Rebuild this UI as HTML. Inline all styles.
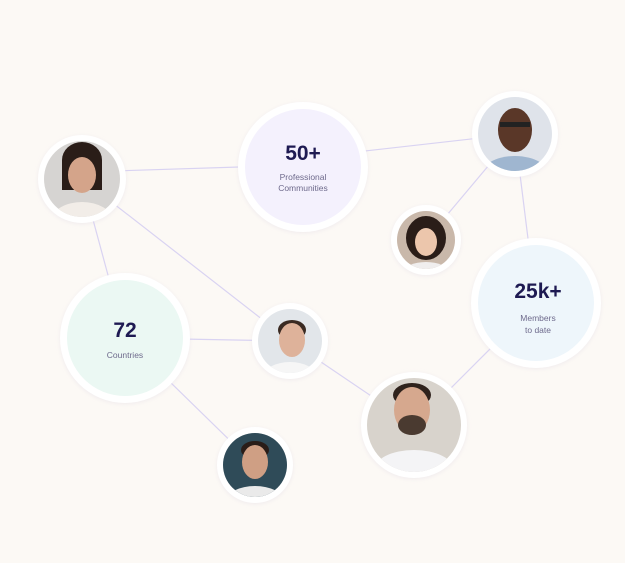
<!DOCTYPE html>
<html><head><style>
html,body{margin:0;padding:0;background:#fcf9f5;}
body{width:625px;height:563px;position:relative;overflow:hidden;font-family:"Liberation Sans",sans-serif;}
svg{position:absolute;left:0;top:0}
</style></head><body>
<svg width="625" height="563" viewBox="0 0 625 563">
<defs>
<filter id="sh" x="-20%" y="-20%" width="140%" height="140%"><feDropShadow dx="0" dy="1" stdDeviation="2" flood-color="#d8d0e0" flood-opacity="0.35"/></filter>
</defs>
<g stroke="#d9d3f2" stroke-width="1.2" fill="none">
<line x1="82" y1="172" x2="303" y2="165"/>
<line x1="303" y1="158" x2="515" y2="134"/>
<line x1="82" y1="179" x2="125" y2="338"/>
<line x1="82" y1="179" x2="290" y2="341"/>
<line x1="125" y1="338" x2="290" y2="341"/>
<line x1="125" y1="338" x2="255" y2="465"/>
<line x1="290" y1="341" x2="414" y2="425"/>
<line x1="515" y1="134" x2="426" y2="240"/>
<line x1="515" y1="134" x2="536" y2="303"/>
<line x1="536" y1="303" x2="414" y2="425"/>
</g>
<!-- stat circles -->
<g filter="url(#sh)">
<circle cx="303" cy="167" r="65" fill="#fff"/>
<circle cx="125" cy="338" r="65" fill="#fff"/>
<circle cx="536" cy="303" r="65" fill="#fff"/>
</g>
<circle cx="303" cy="167" r="58" fill="#f4f1fd"/>
<circle cx="125" cy="338" r="58" fill="#ebf8f3"/>
<circle cx="536" cy="303" r="58" fill="#eef6fb"/>
<g font-family="Liberation Sans, sans-serif" text-anchor="middle">
<text x="303" y="160" font-size="21" font-weight="bold" fill="#1e1a52">50+</text>
<text x="303" y="180" font-size="8.5" fill="#6e6a8c">Professional</text>
<text x="303" y="191" font-size="8.5" fill="#6e6a8c">Communities</text>
<text x="125" y="337" font-size="21" font-weight="bold" fill="#1e1a52">72</text>
<text x="125" y="358" font-size="8.5" fill="#6e6a8c">Countries</text>
<text x="538" y="298" font-size="21" font-weight="bold" fill="#1e1a52">25k+</text>
<text x="538" y="321" font-size="8.5" fill="#6e6a8c">Members</text>
<text x="538" y="333" font-size="8.5" fill="#6e6a8c">to date</text>
</g>
<!-- photo circles -->
<defs>
<clipPath id="c1"><circle cx="82" cy="179" r="38"/></clipPath>
<clipPath id="c2"><circle cx="515" cy="134" r="37"/></clipPath>
<clipPath id="c3"><circle cx="426" cy="240" r="29"/></clipPath>
<clipPath id="c4"><circle cx="290" cy="341" r="32"/></clipPath>
<clipPath id="c5"><circle cx="414" cy="425" r="47"/></clipPath>
<clipPath id="c6"><circle cx="255" cy="465" r="32"/></clipPath>
</defs>
<g filter="url(#sh)" fill="#fff">
<circle cx="82" cy="179" r="44"/>
<circle cx="515" cy="134" r="43"/>
<circle cx="426" cy="240" r="35"/>
<circle cx="290" cy="341" r="38"/>
<circle cx="414" cy="425" r="53"/>
<circle cx="255" cy="465" r="38"/>
</g>
<g clip-path="url(#c1)"><rect x="40" y="140" width="90" height="80" fill="#d6d4d2"/>
<ellipse cx="82" cy="160" rx="20" ry="18" fill="#2a1d18"/><rect x="62" y="160" width="40" height="30" fill="#2a1d18"/>
<ellipse cx="82" cy="175" rx="14" ry="18" fill="#d4a48a"/><ellipse cx="82" cy="220" rx="30" ry="18" fill="#f2ede8"/></g>
<g clip-path="url(#c2)"><rect x="470" y="95" width="90" height="80" fill="#dfe3ea"/>
<ellipse cx="515" cy="130" rx="17" ry="22" fill="#5a3728"/><rect x="500" y="122" width="30" height="5" fill="#222"/>
<ellipse cx="515" cy="178" rx="36" ry="22" fill="#9fb6d0"/></g>
<g clip-path="url(#c3)"><rect x="395" y="210" width="62" height="62" fill="#c9b8aa"/>
<ellipse cx="426" cy="238" rx="20" ry="22" fill="#2a1d18"/><ellipse cx="426" cy="242" rx="11" ry="14" fill="#ecc6ac"/>
<ellipse cx="426" cy="272" rx="22" ry="10" fill="#f0eeee"/></g>
<g clip-path="url(#c4)"><rect x="255" y="305" width="70" height="70" fill="#e2e6ea"/>
<ellipse cx="292" cy="330" rx="14" ry="10" fill="#3a2a22"/><ellipse cx="292" cy="340" rx="13" ry="17" fill="#deb29a"/>
<ellipse cx="290" cy="376" rx="26" ry="14" fill="#f6f6f6"/></g>
<g clip-path="url(#c5)"><rect x="365" y="375" width="100" height="100" fill="#d8d3cc"/>
<ellipse cx="412" cy="395" rx="19" ry="12" fill="#2f221c"/><ellipse cx="412" cy="410" rx="18" ry="23" fill="#d6a88e"/>
<ellipse cx="412" cy="425" rx="14" ry="10" fill="#4a3a30"/>
<ellipse cx="414" cy="470" rx="40" ry="20" fill="#f4f4f6"/></g>
<g clip-path="url(#c6)"><rect x="220" y="430" width="70" height="70" fill="#2f4b58"/>
<ellipse cx="255" cy="450" rx="14" ry="9" fill="#2a1d18"/><ellipse cx="255" cy="462" rx="13" ry="17" fill="#cf9f84"/>
<ellipse cx="255" cy="500" rx="28" ry="14" fill="#eaeaea"/></g>
</svg>
</body></html>
